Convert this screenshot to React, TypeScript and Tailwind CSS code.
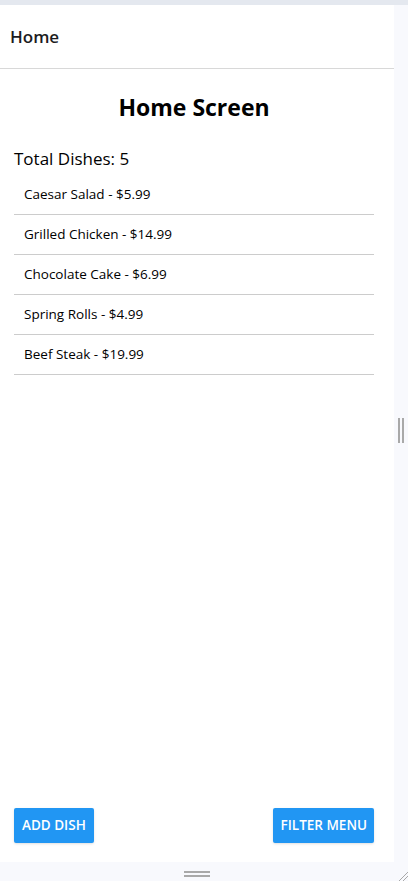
const dishes = [
  { name: "Caesar Salad", price: 5.99 },
  { name: "Grilled Chicken", price: 14.99 },
  { name: "Chocolate Cake", price: 6.99 },
  { name: "Spring Rolls", price: 4.99 },
  { name: "Beef Steak", price: 19.99 },
];

export default function App() {
  return (
    <div
      className="flex h-[881px] w-[408px] flex-col bg-[#f8f9fd] text-black"
      style={{ fontFamily: '"Open Sans", "Noto Sans", sans-serif' }}
    >
      <div className="h-[5px] shrink-0 bg-[#e4e8ef]" />
      <div className="flex flex-1">
        <div className="flex w-[394px] flex-col bg-white">
          <header className="flex h-[64px] shrink-0 items-center border-b border-[#d8d8d8] px-[10px]">
            <span className="text-[17px] font-semibold text-[#1c1c1e]">Home</span>
          </header>
          <main className="flex flex-1 flex-col pl-[14px] pr-[20px]">
            <h1 className="mt-[22px] text-center text-[23px] font-bold leading-[32px]">Home Screen</h1>
            <p className="mt-[24px] text-[17px] leading-[24px]">Total Dishes: {dishes.length}</p>
            <ul className="mt-[4px]">
              {dishes.map((d) => (
                <li key={d.name} className="flex h-[40px] items-center border-b border-[#cccccc] px-[10px] text-[13.5px]">
                  {d.name} - ${d.price}
                </li>
              ))}
            </ul>
            <div className="mt-auto mb-[19px] flex justify-between">
              <button className="h-[35px] rounded-[2px] bg-[#2196f3] px-[8px] text-[13.5px] font-semibold text-white shadow-sm">
                ADD DISH
              </button>
              <button className="h-[35px] rounded-[2px] bg-[#2196f3] px-[7px] text-[13.5px] font-semibold text-white shadow-sm">
                FILTER MENU
              </button>
            </div>
          </main>
        </div>
        <div className="flex flex-1 items-center justify-center">
          <div className="mb-[6px] flex gap-[2px]">
            <div className="h-[25px] w-[2px] bg-[#a9a9a9]" />
            <div className="h-[25px] w-[2px] bg-[#a9a9a9]" />
          </div>
        </div>
      </div>
      <div className="relative flex h-[19px] shrink-0 justify-center pr-[14px]">
        <div className="mt-[9px] flex w-[26px] flex-col gap-[2px]">
          <div className="h-[2px] bg-[#a9a9a9]" />
          <div className="h-[2px] bg-[#a9a9a9]" />
        </div>
        <svg className="absolute right-0 bottom-0" width="12" height="12" viewBox="0 0 12 12">
          <line x1="3" y1="12" x2="12" y2="3" stroke="#a9a9a9" strokeWidth="1" />
          <line x1="7" y1="12" x2="12" y2="7" stroke="#a9a9a9" strokeWidth="1" />
        </svg>
      </div>
    </div>
  );
}
